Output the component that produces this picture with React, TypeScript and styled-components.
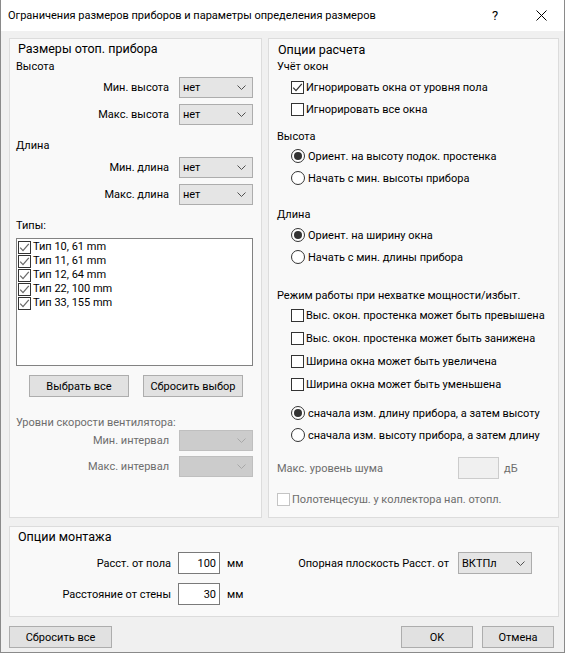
import React from "react";
import styled, { createGlobalStyle } from "styled-components";

const GlobalStyle = createGlobalStyle`
  html, body {
    margin: 0;
    padding: 0;
    background: #ffffff;
  }
  body {
    font-family: Roboto, "Liberation Sans", sans-serif;
    font-size: 11px;
    color: #000;
  }
  * {
    box-sizing: border-box;
  }
`;

const Window = styled.div`
  width: 565px;
  height: 653px;
  display: flex;
  flex-direction: column;
  background: #f0f0f0;
  border: 1px solid #8a8a8a;
  border-top: none;
`;

const TitleBar = styled.div`
  height: 31px;
  flex: none;
  display: flex;
  align-items: center;
  background: #ffffff;
  padding-left: 7px;
`;

const TitleText = styled.div`
  flex: 1;
  font-size: 11px;
  line-height: 16px;
`;

const CaptionButton = styled.div`
  width: 46px;
  height: 31px;
  display: flex;
  align-items: center;
  justify-content: center;
  font-size: 13px;
`;

const Body = styled.div`
  flex: 1;
  display: flex;
  flex-direction: column;
  padding: 7px 5px 0 8px;
`;

const TopRow = styled.div`
  display: flex;
  gap: 6px;
  height: 480px;
`;

const Panel = styled.div<{ $width?: number; $height?: number }>`
  width: ${(p) => (p.$width ? `${p.$width}px` : "auto")};
  height: ${(p) => (p.$height ? `${p.$height}px` : "auto")};
  background: #f9f9f9;
  border: 1px solid #dcdcdc;
  display: flex;
  flex-direction: column;
`;

const LeftPanel = styled(Panel)`
  padding: 0 8px 0 6px;
`;

const RightPanel = styled(Panel)`
  padding: 0 0 0 8px;
`;

const GroupTitle = styled.div<{ $mt: number; $ml: number }>`
  font-size: 12.5px;
  line-height: 18px;
  margin: ${(p) => p.$mt}px 0 0 ${(p) => p.$ml}px;
`;

const SectionLabel = styled.div<{ $mt: number; $disabled?: boolean }>`
  line-height: 16px;
  margin-top: ${(p) => p.$mt}px;
  color: ${(p) => (p.$disabled ? "#6d6d6d" : "#000")};
  white-space: nowrap;
`;

const FieldRow = styled.div<{ $mt: number }>`
  display: grid;
  grid-template-columns: 1fr 74px;
  column-gap: 10px;
  align-items: center;
  height: 21px;
  margin-top: ${(p) => p.$mt}px;
`;

const FieldLabel = styled.div<{ $disabled?: boolean }>`
  text-align: right;
  white-space: nowrap;
  color: ${(p) => (p.$disabled ? "#6d6d6d" : "#000")};
`;

const SelectBox = styled.div<{ $disabled?: boolean; $h: number }>`
  height: ${(p) => p.$h}px;
  display: flex;
  align-items: center;
  justify-content: space-between;
  padding: 0 6px 0 3px;
  background: ${(p) => (p.$disabled ? "#cccccc" : "#e5e5e5")};
  border: 1px solid ${(p) => (p.$disabled ? "#bfbfbf" : "#adadad")};
  color: #000;
`;

const ListBox = styled.div`
  margin-top: 4px;
  height: 128px;
  background: #ffffff;
  border: 1px solid #828282;
  padding: 1px 0 0 1px;
`;

const ListItem = styled.div`
  height: 14px;
  display: flex;
  align-items: center;
  gap: 2px;
  line-height: 14px;
`;

const ButtonRow = styled.div<{ $mt: number }>`
  display: flex;
  gap: 14px;
  margin: ${(p) => p.$mt}px 0 0 13px;
`;

const Button = styled.div<{ $w: number }>`
  width: ${(p) => p.$w}px;
  height: 22px;
  display: flex;
  align-items: center;
  justify-content: center;
  background: #e1e1e1;
  border: 1px solid #adadad;
  white-space: nowrap;
`;

const OptionRow = styled.div<{ $h: number; $mt?: number; $indent?: number }>`
  height: ${(p) => p.$h}px;
  margin-top: ${(p) => p.$mt ?? 0}px;
  padding-left: ${(p) => p.$indent ?? 14}px;
  display: flex;
  align-items: center;
  white-space: nowrap;
`;

const OptionText = styled.span<{ $gap: number; $disabled?: boolean }>`
  margin-left: ${(p) => p.$gap}px;
  color: ${(p) => (p.$disabled ? "#6d6d6d" : "#000")};
`;

const CheckSquare = styled.span<{ $disabled?: boolean }>`
  width: 13px;
  height: 13px;
  flex: none;
  display: inline-flex;
  align-items: center;
  justify-content: center;
  background: #ffffff;
  border: 1px solid ${(p) => (p.$disabled ? "#c4c4c4" : "#333333")};
`;

const RadioCircle = styled.span<{ $on?: boolean }>`
  width: 14px;
  height: 14px;
  flex: none;
  border-radius: 50%;
  border: 1px solid #333333;
  background: #ffffff;
  display: inline-flex;
  align-items: center;
  justify-content: center;
  &::after {
    content: "";
    width: 8px;
    height: 8px;
    border-radius: 50%;
    background: ${(p) => (p.$on ? "#333333" : "transparent")};
  }
`;

const NoiseRow = styled.div`
  height: 22px;
  margin-top: 11px;
  display: flex;
  align-items: center;
  color: #6d6d6d;
`;

const NoiseLabel = styled.div`
  width: 181px;
`;

const TextInput = styled.div<{ $disabled?: boolean; $w: number }>`
  width: ${(p) => p.$w}px;
  height: 22px;
  display: flex;
  align-items: center;
  justify-content: flex-end;
  padding-right: 3px;
  background: ${(p) => (p.$disabled ? "#f0f0f0" : "#ffffff")};
  border: 1px solid ${(p) => (p.$disabled ? "#cccccc" : "#7a7a7a")};
`;

const Unit = styled.div<{ $disabled?: boolean; $ml: number }>`
  margin-left: ${(p) => p.$ml}px;
  color: ${(p) => (p.$disabled ? "#6d6d6d" : "#000")};
`;

const MountPanel = styled(Panel)`
  margin-top: 8px;
  height: 91px;
  padding: 0 26px 0 0;
`;

const MountGrid = styled.div`
  display: grid;
  grid-template-columns: 161px 42px 40px 1fr 74px;
  grid-template-rows: 22px 22px;
  column-gap: 7px;
  row-gap: 9px;
  align-items: center;
  margin-top: 6px;
`;

const MountLabel = styled.div<{ $pr?: number }>`
  text-align: right;
  white-space: nowrap;
  padding-right: ${(p) => p.$pr ?? 0}px;
`;

const Footer = styled.div`
  display: flex;
  align-items: center;
  margin-top: 9px;
  padding-right: 5px;
`;

const FooterSpacer = styled.div`
  flex: 1;
`;

const FooterGroup = styled.div`
  display: flex;
  gap: 9px;
`;

const Chevron = ({ disabled }: { disabled?: boolean }) => (
  <svg width="9" height="5" viewBox="0 0 9 5">
    <polyline
      points="0.5,0.5 4.5,4.5 8.5,0.5"
      fill="none"
      stroke={disabled ? "#a8a8a8" : "#505050"}
      strokeWidth="1"
    />
  </svg>
);

const Tick = ({ color }: { color: string }) => (
  <svg width="11" height="11" viewBox="0 0 11 11">
    <polyline
      points="1.2,5.6 4,8.6 9.8,1.8"
      fill="none"
      stroke={color}
      strokeWidth="1.3"
    />
  </svg>
);

const Close = () => (
  <svg width="11" height="11" viewBox="0 0 11 11">
    <path d="M0.5 0.5 L10.5 10.5 M10.5 0.5 L0.5 10.5" stroke="#000" strokeWidth="1" />
  </svg>
);

const Select = ({ value, disabled, h = 21 }: { value?: string; disabled?: boolean; h?: number }) => (
  <SelectBox $disabled={disabled} $h={h}>
    <span>{value}</span>
    <Chevron disabled={disabled} />
  </SelectBox>
);

const Check = ({
  label,
  checked,
  h = 22,
  mt,
  indent,
  disabled,
}: {
  label: string;
  checked?: boolean;
  h?: number;
  mt?: number;
  indent?: number;
  disabled?: boolean;
}) => (
  <OptionRow $h={h} $mt={mt} $indent={indent}>
    <CheckSquare $disabled={disabled}>{checked && <Tick color="#333" />}</CheckSquare>
    <OptionText $gap={2} $disabled={disabled}>
      {label}
    </OptionText>
  </OptionRow>
);

const Radio = ({ label, on, mt }: { label: string; on?: boolean; mt?: number }) => (
  <OptionRow $h={22} $mt={mt}>
    <RadioCircle $on={on} />
    <OptionText $gap={3}>{label}</OptionText>
  </OptionRow>
);

const types = ["Тип 10, 61 mm", "Тип 11, 61 mm", "Тип 12, 64 mm", "Тип 22, 100 mm", "Тип 33, 155 mm"];

export default function App() {
  return (
    <Window>
      <GlobalStyle />
      <TitleBar>
        <TitleText>Ограничения размеров приборов и параметры определения размеров</TitleText>
        <CaptionButton>?</CaptionButton>
        <CaptionButton>
          <Close />
        </CaptionButton>
      </TitleBar>
      <Body>
        <TopRow>
          <LeftPanel $width={253}>
            <GroupTitle $mt={1} $ml={2}>
              Размеры отоп. прибора
            </GroupTitle>
            <SectionLabel $mt={1}>Высота</SectionLabel>
            <FieldRow $mt={2}>
              <FieldLabel>Мин. высота</FieldLabel>
              <Select value="нет" />
            </FieldRow>
            <FieldRow $mt={6}>
              <FieldLabel>Макс. высота</FieldLabel>
              <Select value="нет" />
            </FieldRow>
            <SectionLabel $mt={13}>Длина</SectionLabel>
            <FieldRow $mt={3}>
              <FieldLabel>Мин. длина</FieldLabel>
              <Select value="нет" />
            </FieldRow>
            <FieldRow $mt={6}>
              <FieldLabel>Макс. длина</FieldLabel>
              <Select value="нет" />
            </FieldRow>
            <SectionLabel $mt={13}>Типы:</SectionLabel>
            <ListBox>
              {types.map((t) => (
                <ListItem key={t}>
                  <CheckSquare>
                    <Tick color="#6a6a6a" />
                  </CheckSquare>
                  <span>{t}</span>
                </ListItem>
              ))}
            </ListBox>
            <ButtonRow $mt={9}>
              <Button $w={100}>Выбрать все</Button>
              <Button $w={100}>Сбросить выбор</Button>
            </ButtonRow>
            <SectionLabel $mt={18} $disabled>
              Уровни скорости вентилятора:
            </SectionLabel>
            <FieldRow $mt={-1}>
              <FieldLabel $disabled>Мин. интервал</FieldLabel>
              <Select disabled />
            </FieldRow>
            <FieldRow $mt={5}>
              <FieldLabel $disabled>Макс. интервал</FieldLabel>
              <Select disabled />
            </FieldRow>
          </LeftPanel>

          <RightPanel $width={291}>
            <GroupTitle $mt={2} $ml={1}>
              Опции расчета
            </GroupTitle>
            <SectionLabel $mt={0}>Учёт окон</SectionLabel>
            <Check label="Игнорировать окна от уровня пола" checked mt={1} />
            <Check label="Игнорировать все окна" />
            <SectionLabel $mt={9}>Высота</SectionLabel>
            <Radio label="Ориент. на высоту подок. простенка" on />
            <Radio label="Начать с мин. высоты прибора" />
            <SectionLabel $mt={18}>Длина</SectionLabel>
            <Radio label="Ориент. на ширину окна" on mt={1} />
            <Radio label="Начать с мин. длины прибора" />
            <SectionLabel $mt={20}>Режим работы при нехватке мощности/избыт.</SectionLabel>
            <Check label="Выс. окон. простенка может быть превышена" h={23} />
            <Check label="Выс. окон. простенка может быть занижена" h={23} />
            <Check label="Ширина окна может быть увеличена" h={23} />
            <Check label="Ширина окна может быть уменьшена" h={23} />
            <Radio label="сначала изм. длину прибора, а затем высоту" on mt={6} />
            <Radio label="сначала изм. высоту прибора, а затем длину" />
            <NoiseRow>
              <NoiseLabel>Макс. уровень шума</NoiseLabel>
              <TextInput $w={41} $disabled />
              <Unit $disabled $ml={5}>
                дБ
              </Unit>
            </NoiseRow>
            <Check label="Полотенцесуш. у коллектора нап. отопл." indent={0} mt={9} disabled />
          </RightPanel>
        </TopRow>

        <MountPanel>
          <GroupTitle $mt={1} $ml={8}>
            Опции монтажа
          </GroupTitle>
          <MountGrid>
            <MountLabel>Расст. от пола</MountLabel>
            <TextInput $w={42}>100</TextInput>
            <Unit $ml={0}>мм</Unit>
            <MountLabel $pr={2}>Опорная плоскость Расст. от</MountLabel>
            <Select value="ВКТПл" h={22} />
            <MountLabel>Расстояние от стены</MountLabel>
            <TextInput $w={42}>30</TextInput>
            <Unit $ml={0}>мм</Unit>
          </MountGrid>
        </MountPanel>

        <Footer>
          <Button $w={103}>Сбросить все</Button>
          <FooterSpacer />
          <FooterGroup>
            <Button $w={72}>OK</Button>
            <Button $w={72}>Отмена</Button>
          </FooterGroup>
        </Footer>
      </Body>
    </Window>
  );
}
